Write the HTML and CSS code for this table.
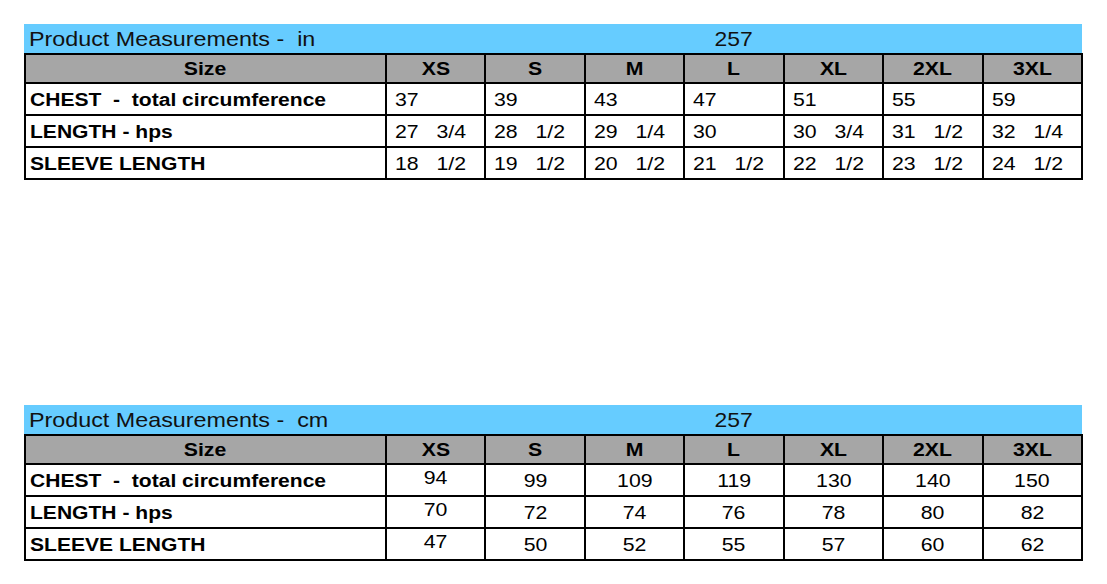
FILE: index.html
```html
<!DOCTYPE html>
<html>
<head>
<meta charset="utf-8">
<link rel="stylesheet" href="styles.css">
</head>
<body>
<div class="page">
  <section class="chart">
    <div class="title">
      <div class="t-label"><span class="sx">Product Measurements -&nbsp; in</span></div>
      <div class="t-num"><span class="sx">257</span></div>
    </div>
    <div class="grid">
      <div class="h first"><span class="sx">Size</span></div>
      <div class="h"><span class="sx">XS</span></div><div class="h"><span class="sx">S</span></div><div class="h"><span class="sx">M</span></div><div class="h"><span class="sx">L</span></div><div class="h"><span class="sx">XL</span></div><div class="h"><span class="sx">2XL</span></div><div class="h"><span class="sx">3XL</span></div>

      <div class="lab"><span class="sx">CHEST&nbsp; -&nbsp; total circumference</span></div>
      <div class="v"><span class="sx">37</span></div><div class="v"><span class="sx">39</span></div><div class="v"><span class="sx">43</span></div><div class="v"><span class="sx">47</span></div><div class="v"><span class="sx">51</span></div><div class="v"><span class="sx">55</span></div><div class="v"><span class="sx">59</span></div>

      <div class="lab"><span class="sx">LENGTH - hps</span></div>
      <div class="v"><span class="sx">27&nbsp;&nbsp; 3/4</span></div><div class="v"><span class="sx">28&nbsp;&nbsp; 1/2</span></div><div class="v"><span class="sx">29&nbsp;&nbsp; 1/4</span></div><div class="v"><span class="sx">30</span></div><div class="v"><span class="sx">30&nbsp;&nbsp; 3/4</span></div><div class="v"><span class="sx">31&nbsp;&nbsp; 1/2</span></div><div class="v"><span class="sx">32&nbsp;&nbsp; 1/4</span></div>

      <div class="lab"><span class="sx">SLEEVE LENGTH</span></div>
      <div class="v"><span class="sx">18&nbsp;&nbsp; 1/2</span></div><div class="v"><span class="sx">19&nbsp;&nbsp; 1/2</span></div><div class="v"><span class="sx">20&nbsp;&nbsp; 1/2</span></div><div class="v"><span class="sx">21&nbsp;&nbsp; 1/2</span></div><div class="v"><span class="sx">22&nbsp;&nbsp; 1/2</span></div><div class="v"><span class="sx">23&nbsp;&nbsp; 1/2</span></div><div class="v"><span class="sx">24&nbsp;&nbsp; 1/2</span></div>
    </div>
  </section>

  <section class="chart second">
    <div class="title">
      <div class="t-label"><span class="sx">Product Measurements -&nbsp; cm</span></div>
      <div class="t-num"><span class="sx">257</span></div>
    </div>
    <div class="grid">
      <div class="h first"><span class="sx">Size</span></div>
      <div class="h"><span class="sx">XS</span></div><div class="h"><span class="sx">S</span></div><div class="h"><span class="sx">M</span></div><div class="h"><span class="sx">L</span></div><div class="h"><span class="sx">XL</span></div><div class="h"><span class="sx">2XL</span></div><div class="h"><span class="sx">3XL</span></div>

      <div class="lab"><span class="sx">CHEST&nbsp; -&nbsp; total circumference</span></div>
      <div class="c hi"><span class="sx">94</span></div><div class="c"><span class="sx">99</span></div><div class="c"><span class="sx">109</span></div><div class="c"><span class="sx">119</span></div><div class="c"><span class="sx">130</span></div><div class="c"><span class="sx">140</span></div><div class="c"><span class="sx">150</span></div>

      <div class="lab"><span class="sx">LENGTH - hps</span></div>
      <div class="c hi"><span class="sx">70</span></div><div class="c"><span class="sx">72</span></div><div class="c"><span class="sx">74</span></div><div class="c"><span class="sx">76</span></div><div class="c"><span class="sx">78</span></div><div class="c"><span class="sx">80</span></div><div class="c"><span class="sx">82</span></div>

      <div class="lab"><span class="sx">SLEEVE LENGTH</span></div>
      <div class="c hi"><span class="sx">47</span></div><div class="c"><span class="sx">50</span></div><div class="c"><span class="sx">52</span></div><div class="c"><span class="sx">55</span></div><div class="c"><span class="sx">57</span></div><div class="c"><span class="sx">60</span></div><div class="c"><span class="sx">62</span></div>
    </div>
  </section>
</div>
</body>
</html>
```

FILE: styles.css
```css
html, body {
  margin: 0;
  padding: 0;
  background: #ffffff;
}

body {
  font-family: "Liberation Sans", Arial, sans-serif;
  color: #000;
}

.page {
  padding: 24px 0 0 24px;
}

.chart {
  width: 1059px;
}

.chart.second {
  margin-top: 225px;
}

.sx {
  display: inline-block;
  white-space: nowrap;
  transform: scaleX(1.12);
  transform-origin: center center;
}

.title {
  display: grid;
  grid-template-columns: 359px repeat(7, 1fr);
  column-gap: 2px;
  padding: 0 2px;
  height: 29px;
  background: #66ccff;
  width: 1058px;
  box-sizing: border-box;
  align-items: center;
  font-size: 21px;
  color: #111;
}

.t-label {
  grid-column: 1 / 4;
  padding-left: 3px;
  white-space: nowrap;
}

.t-label .sx {
  transform: scaleX(1.11);
  transform-origin: left center;
}

.t-num {
  grid-column: 4 / 7;
  text-align: center;
}

.t-num .sx {
  transform: scaleX(1.09);
}

.grid {
  display: grid;
  grid-template-columns: 359px repeat(7, 1fr);
  grid-template-rows: 27px 30px 30px 30px;
  gap: 2px;
  padding: 2px;
  background: #000;
}

.grid > div {
  display: flex;
  align-items: center;
  white-space: nowrap;
  background: #fff;
  box-sizing: border-box;
}

.grid > .h {
  background: #a6a6a6;
  justify-content: center;
  font-weight: bold;
  font-size: 18px;
  padding-top: 1px;
}

.grid > .h .sx {
  transform: scaleX(1.18);
}

.grid > .lab {
  font-weight: bold;
  font-size: 18px;
  padding-left: 4px;
  padding-top: 3px;
}

.grid > .lab .sx {
  transform: scaleX(1.17);
  transform-origin: left center;
}

.grid > .v {
  font-size: 19px;
  padding-left: 8px;
  padding-top: 2px;
}

.grid > .v .sx {
  transform-origin: left center;
}

.grid > .c {
  font-size: 19px;
  justify-content: center;
  padding-top: 2px;
}

.grid > .c.hi {
  padding-top: 0;
  padding-bottom: 4px;
}
```
